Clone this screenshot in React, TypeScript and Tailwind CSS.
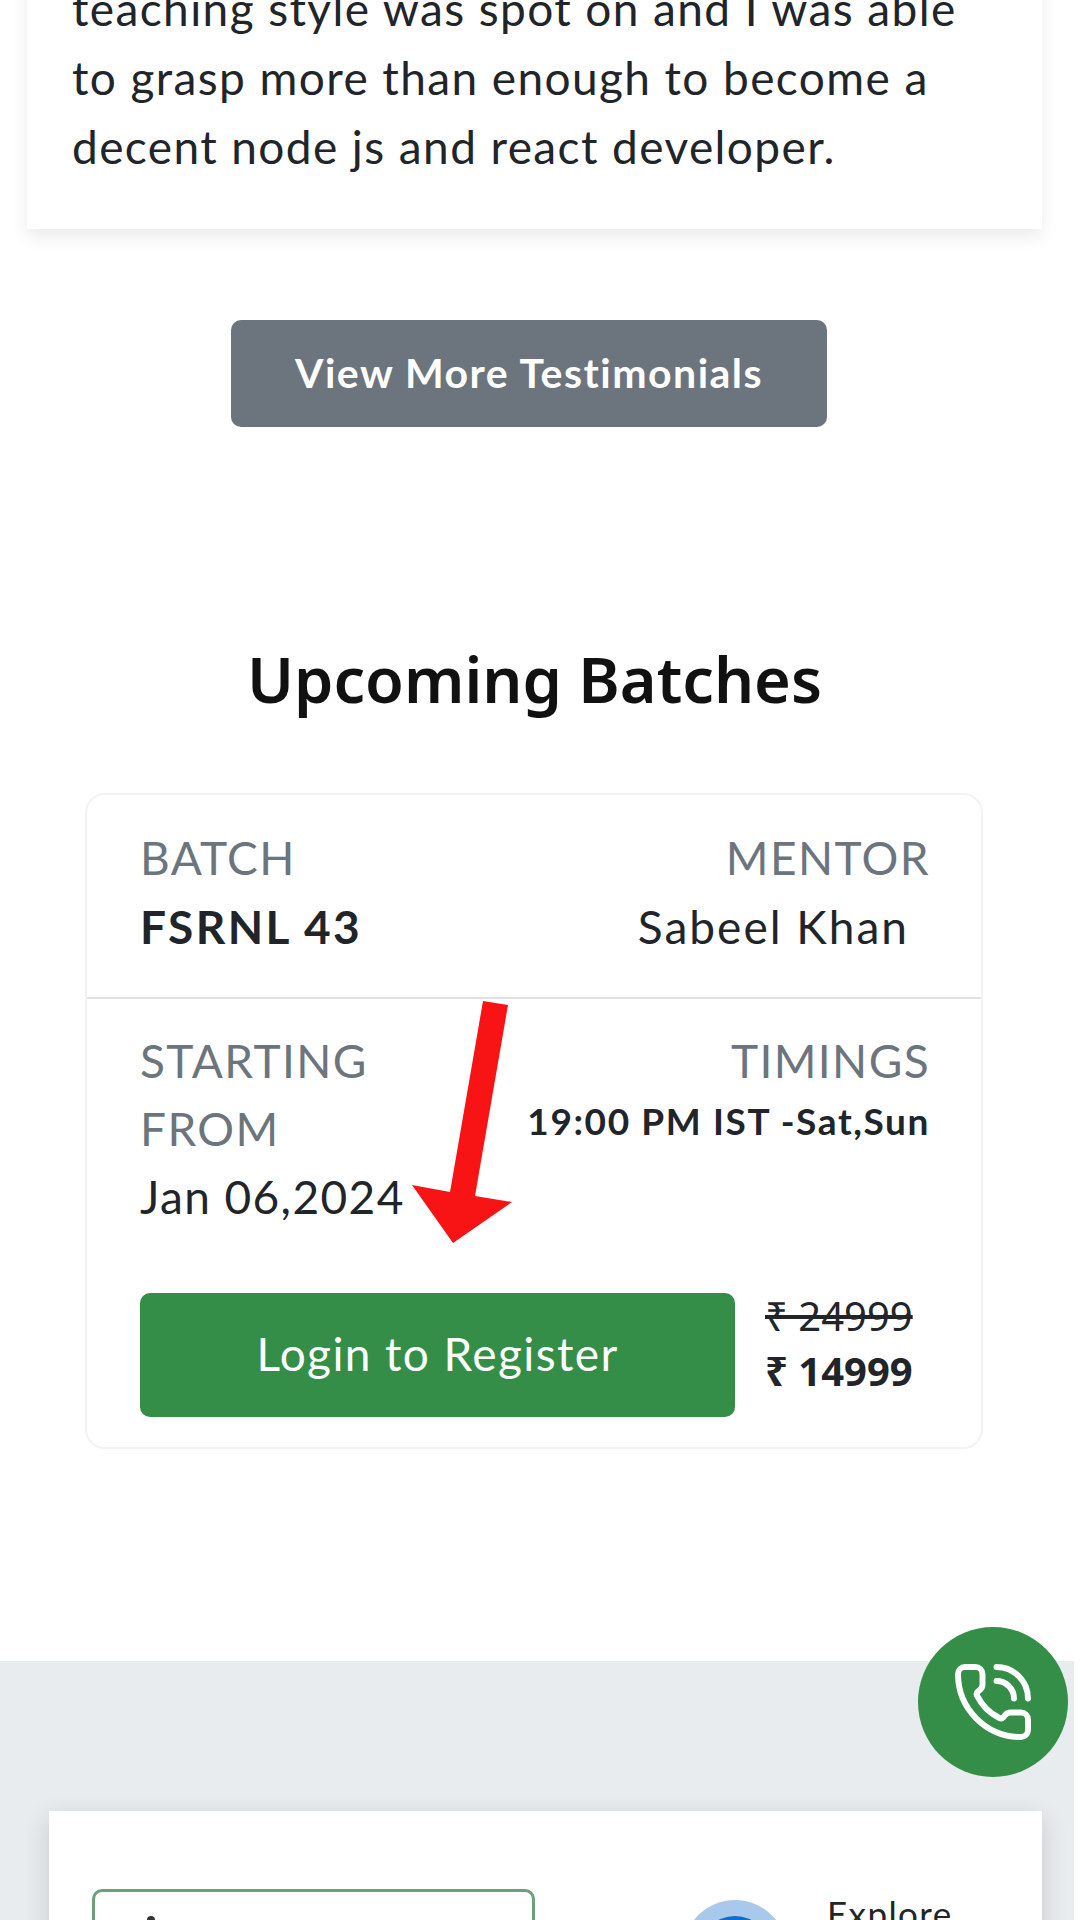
import { PhoneCall } from "lucide-react";

function Label({ children }: { children: React.ReactNode }) {
  return <p className="text-[#6c757d]">{children}</p>;
}

function BatchCard() {
  return (
    <div className="ml-[85px] mt-[72px] w-[898px] shrink-0 rounded-[20px] border-2 border-[#f3f3f3] bg-white">
      <div className="flex justify-between border-b-2 border-[#dee2e6] pb-[36px] pl-[53px] pr-[51px] pt-[28px]">
        <div>
          <Label>BATCH</Label>
          <p className="font-bold tracking-[2.4px]">FSRNL 43</p>
        </div>
        <div className="flex flex-col items-end">
          <Label>MENTOR</Label>
          <p className="pr-[21px] tracking-[2px]">Sabeel Khan</p>
        </div>
      </div>
      <div className="pb-[30px] pl-[53px] pr-[51px] pt-[28px]">
        <div className="flex justify-between leading-[68px]">
          <div>
            <Label>
              STARTING
              <br />
              FROM
            </Label>
            <p>Jan 06,2024</p>
          </div>
          <div className="flex flex-col items-end">
            <Label>TIMINGS</Label>
            <p className="mt-[-8px] text-[37px] font-bold tracking-[1.6px]">19:00 PM IST -Sat,Sun</p>
          </div>
        </div>
        <div className="mt-[62px] flex items-start gap-[30px]">
          <button className="h-[124px] w-[595px] rounded-[10px] bg-[#348e47] pb-[4px] text-white">Login to Register</button>
          <div className="-mt-[5px] text-[40px] leading-[55px] tracking-normal">
            <p className="font-[Noto_Sans,sans-serif] line-through">₹ 24999</p>
            <p className="font-[Noto_Sans,sans-serif] font-bold">₹ 14999</p>
          </div>
        </div>
      </div>
    </div>
  );
}

export default function App() {
  return (
    <div className="relative h-[1920px] w-[1080px] overflow-hidden bg-white font-[Lato,sans-serif] text-[46px] leading-[69px] tracking-[1.4px] text-[#212529]">
      <div className="flex h-full w-[1074px] flex-col">
        <div className="-mt-[26px] ml-[27px] w-[1015px] shrink-0 bg-white pb-[48px] pl-[45px] shadow-[0_8px_16px_rgba(0,0,0,0.08)]">
          <p>teaching style was spot on and I was able</p>
          <p>to grasp more than enough to become a</p>
          <p>decent node js and react developer.</p>
        </div>

        <button className="ml-[231px] mt-[91px] h-[107px] w-[596px] shrink-0 rounded-[10px] bg-[#6c757d] pb-[2px] text-[41px] font-bold tracking-[1.5px] text-white">
          View More Testimonials
        </button>

        <h2 className="mt-[210px] shrink-0 pr-[5px] text-center font-[Noto_Sans,sans-serif] text-[63px] font-semibold leading-[84px] tracking-normal text-[#111]">
          Upcoming Batches
        </h2>

        <BatchCard />

        <div className="mt-[212px] flex-1 bg-[#e9ecef] pl-[49px] pt-[150px]">
          <div className="flex h-full w-[993px] items-start bg-white pl-[43px] pt-[78px] shadow-[0_8px_24px_rgba(0,0,0,0.15)]">
            <div className="relative h-[200px] w-[443px] shrink-0 rounded-[10px] border-[3px] border-[#6f9f7a]">
              <span className="absolute left-[52px] top-[24px] size-[8px] rounded-full bg-[#333]" />
            </div>
            <div className="ml-[148px] mt-[11px] flex size-[104px] shrink-0 items-center justify-center rounded-full bg-[#a9c9ec]">
              <div className="size-[72px] rounded-full bg-[#0d6ec9]" />
            </div>
            <p className="ml-[40px] text-[35px] leading-[48px]">Explore</p>
          </div>
        </div>
      </div>

      {/* annotation arrow drawn over the screenshot */}
      <svg className="absolute left-[400px] top-[990px]" width="140" height="270" viewBox="0 0 140 270">
        <polygon
          points="83,11 108,15 75,206 112,212 53,253 12,195 50,202"
          fill="#f81414"
        />
      </svg>

      <a className="absolute left-[918px] top-[1627px] flex size-[150px] items-center justify-center rounded-full bg-[#348e47]">
        <PhoneCall className="size-[84px] text-white" strokeWidth={1.7} />
      </a>
    </div>
  );
}
